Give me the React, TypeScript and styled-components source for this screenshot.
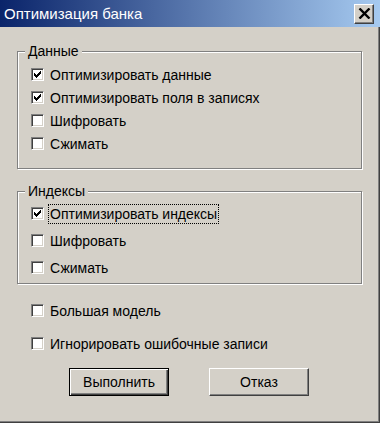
import React from "react";
import styled, { createGlobalStyle } from "styled-components";

const Global = createGlobalStyle`
  html, body { margin: 0; padding: 0; background: #D4D0C8; }
  body {
    font-family: "Liberation Sans", Arial, sans-serif;
    font-size: 14px;
    color: #000;
  }
  * { box-sizing: border-box; }
`;

const Window = styled.div`
  width: 380px;
  height: 423px;
  background: #d4d0c8;
  display: flex;
  flex-direction: column;
`;

const TitleBar = styled.div`
  height: 27px;
  flex: none;
  display: flex;
  align-items: center;
  justify-content: space-between;
  padding: 0 6px 0 4px;
  background: linear-gradient(to right, #0a246a, #a6caf0);
  color: #fff;
  font-size: 15px;
`;

const Title = styled.span`
  line-height: 17px;
  white-space: nowrap;
`;

const CloseButton = styled.button`
  width: 20px;
  height: 20px;
  padding: 0;
  margin: 0;
  display: flex;
  align-items: center;
  justify-content: center;
  background: #d4d0c8;
  border-style: solid;
  border-width: 1px;
  border-color: #fff #404040 #404040 #fff;
  box-shadow: inset -1px -1px 0 #808080;
`;

const Body = styled.div`
  flex: 1;
  display: flex;
  flex-direction: column;
  align-items: flex-start;
  padding: 24px 0 0 17px;
  border-right: 1px solid #404040;
  border-bottom: 1px solid #404040;
  box-shadow: inset -1px -1px 0 #808080;
`;

const Group = styled.div<{ $top: number; $bottom: number; $mt?: number }>`
  position: relative;
  width: 345px;
  margin-top: ${(p) => p.$mt ?? 0}px;
  padding: ${(p) => p.$top}px 0 ${(p) => p.$bottom}px 13px;
  border: 1px solid #808080;
  box-shadow: 1px 1px 0 #fff, inset 1px 1px 0 #fff;
  display: flex;
  flex-direction: column;
`;

const Legend = styled.span`
  position: absolute;
  top: -9px;
  left: 7px;
  padding: 0 3px;
  line-height: 16px;
  background: #d4d0c8;
`;

const Row = styled.div<{ $h: number; $mt?: number; $ml?: number }>`
  height: ${(p) => p.$h}px;
  margin-top: ${(p) => p.$mt ?? 0}px;
  margin-left: ${(p) => p.$ml ?? 0}px;
  display: flex;
  align-items: center;
`;

const Box = styled.span`
  width: 13px;
  height: 13px;
  flex: none;
  background: #fff;
  border-style: solid;
  border-width: 1px;
  border-color: #808080 #fff #fff #808080;
  box-shadow: inset 1px 1px 0 #404040, inset -1px -1px 0 #d4d0c8;
  padding: 2px;
`;

const Label = styled.span<{ $focus?: boolean }>`
  margin-left: 4px;
  padding: 0 1px;
  line-height: 18px;
  border: 1px dotted ${(p) => (p.$focus ? "#000" : "transparent")};
  white-space: nowrap;
`;

const Buttons = styled.div`
  display: flex;
  gap: 40px;
  margin: 13px 0 0 52px;
`;

const PushButton = styled.button<{ $default?: boolean }>`
  width: 100px;
  height: 28px;
  padding: 0;
  font-family: "Liberation Sans", Arial, sans-serif;
  font-size: 14px;
  color: #000;
  background: #d4d0c8;
  border-style: solid;
  border-width: 1px;
  border-color: ${(p) => (p.$default ? "#000" : "#fff #404040 #404040 #fff")};
  box-shadow: ${(p) =>
    p.$default
      ? "inset 1px 1px 0 #fff, inset -1px -1px 0 #404040, inset -2px -2px 0 #808080"
      : "inset -1px -1px 0 #808080"};
`;

const Check = () => (
  <svg width="7" height="7" viewBox="0 0 7 7" style={{ display: "block" }} shapeRendering="crispEdges">
    <path
      fill="#000"
      d="M0 2h1v3H0z M1 3h1v3H1z M2 4h1v3H2z M3 3h1v3H3z M4 2h1v3H4z M5 1h1v3H5z M6 0h1v3H6z"
    />
  </svg>
);

const CheckItem: React.FC<{
  label: string;
  checked?: boolean;
  focus?: boolean;
  h: number;
  mt?: number;
  ml?: number;
}> = ({ label, checked, focus, h, mt, ml }) => (
  <Row $h={h} $mt={mt} $ml={ml}>
    <Box>{checked && <Check />}</Box>
    <Label $focus={focus}>{label}</Label>
  </Row>
);

export default function App() {
  return (
    <>
      <Global />
      <Window>
        <TitleBar>
          <Title>Оптимизация банка</Title>
          <CloseButton aria-label="Закрыть">
            <svg width="13" height="11" viewBox="0 0 13 11">
              <path d="M1.5 0.5 L11.5 10.5 M11.5 0.5 L1.5 10.5" stroke="#000" strokeWidth="2.4" />
            </svg>
          </CloseButton>
        </TitleBar>
        <Body>
          <Group $top={11} $bottom={13}>
            <Legend>Данные</Legend>
            <CheckItem h={23} checked label="Оптимизировать данные" />
            <CheckItem h={23} checked label="Оптимизировать поля в записях" />
            <CheckItem h={23} label="Шифровать" />
            <CheckItem h={23} label="Сжимать" />
          </Group>
          <Group $top={8} $bottom={2} $mt={22}>
            <Legend>Индексы</Legend>
            <CheckItem h={27} checked focus label="Оптимизировать индексы" />
            <CheckItem h={27} label="Шифровать" />
            <CheckItem h={27} label="Сжимать" />
          </Group>
          <CheckItem h={23} mt={15} ml={14} label="Большая модель" />
          <CheckItem h={23} mt={10} ml={14} label="Игнорировать ошибочные записи" />
          <Buttons>
            <PushButton $default>Выполнить</PushButton>
            <PushButton>Отказ</PushButton>
          </Buttons>
        </Body>
      </Window>
    </>
  );
}
